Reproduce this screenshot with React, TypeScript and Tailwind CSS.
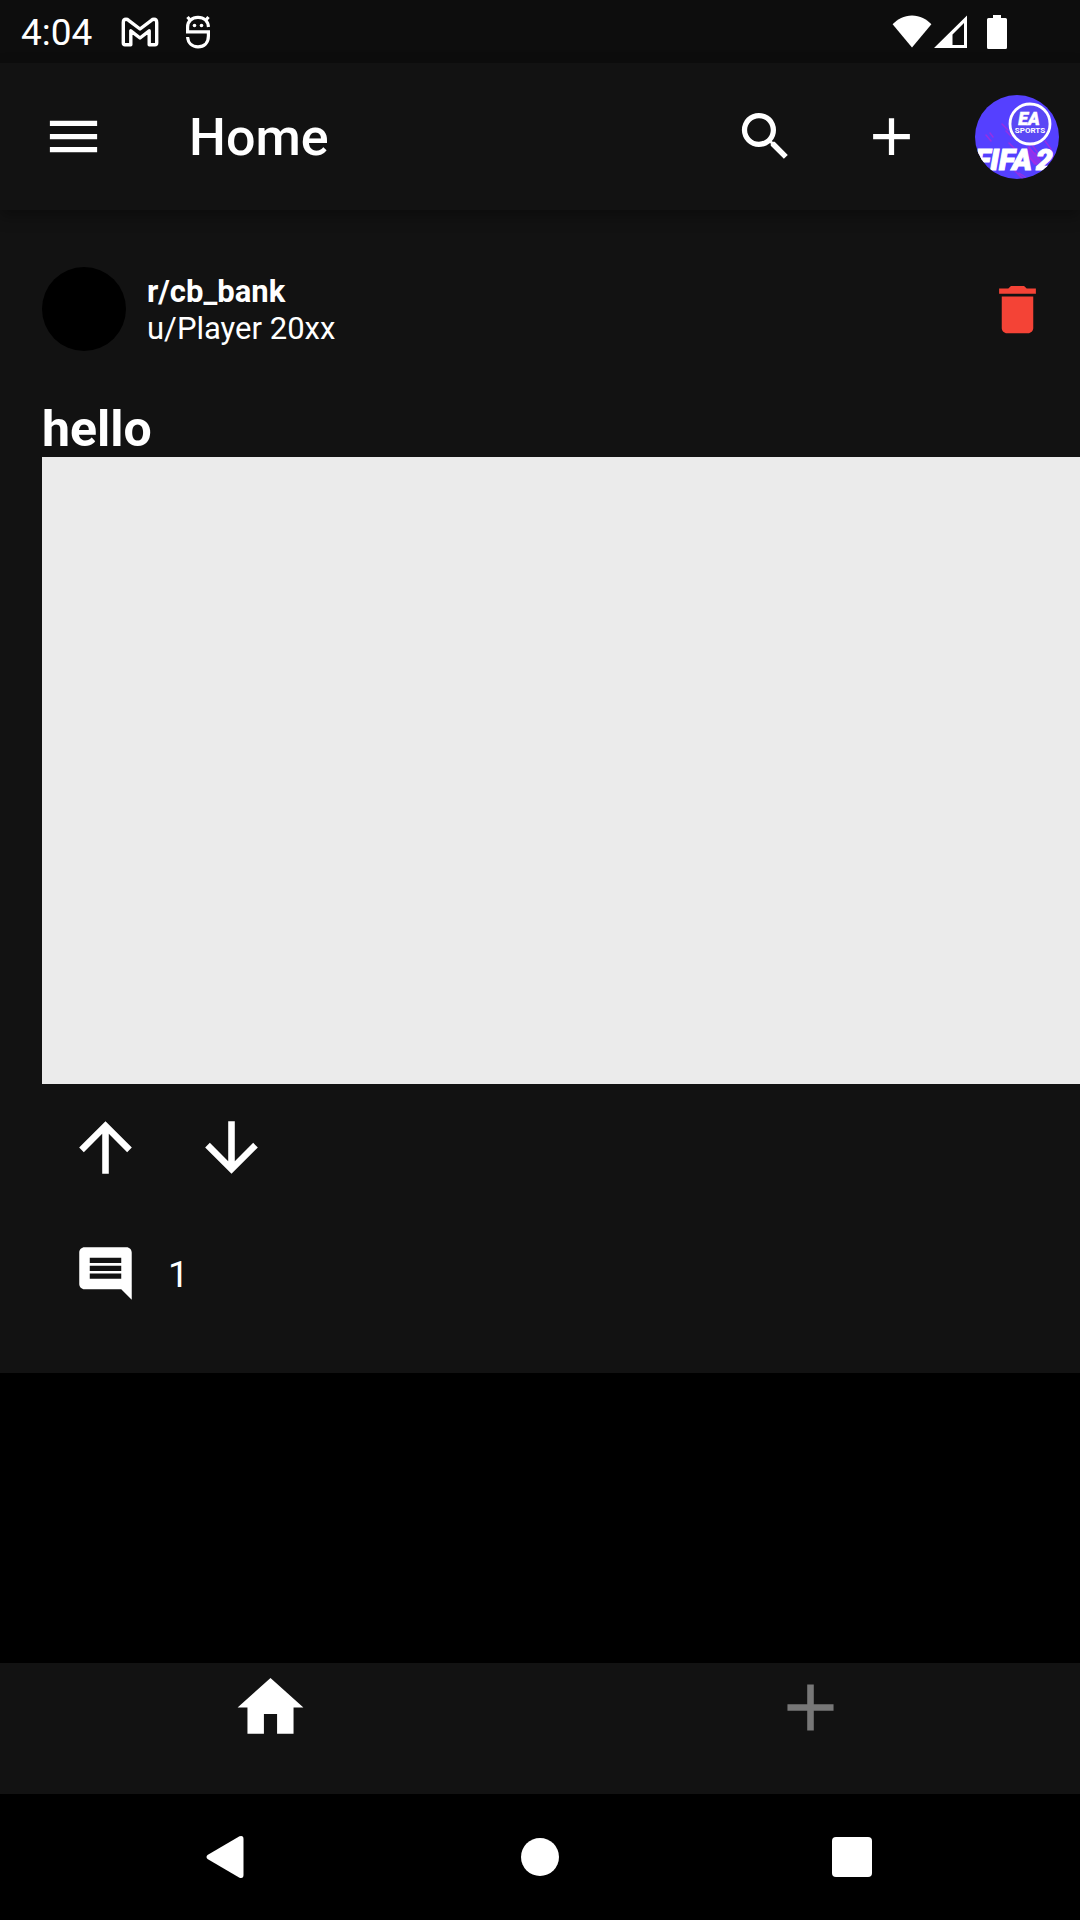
import type { ReactNode } from "react";
import {
  MdAdd,
  MdArrowDownward,
  MdArrowUpward,
  MdComment,
  MdDelete,
  MdHome,
  MdMenu,
  MdSearch,
} from "react-icons/md";

function IconButton({ label, children }: { label: string; children: ReactNode }) {
  return (
    <button
      type="button"
      aria-label={label}
      className="flex size-[126px] shrink-0 items-center justify-center"
    >
      {children}
    </button>
  );
}

function StatusBar() {
  return (
    <div className="flex h-[63px] items-center bg-[#0d0d0d] pr-[72px] pl-[21px]">
      <span className="pt-[2px] text-[37px] leading-[42px]">4:04</span>
      <svg
        viewBox="0 0 38 30"
        className="ml-[29px] h-[30px] w-[38px]"
        fill="none"
        stroke="currentColor"
        strokeWidth="3.4"
        strokeLinejoin="round"
        aria-hidden="true"
      >
        <path d="M2.300 5.400Q2.300 2.300 5 2.300Q6.500 2.300 7.600 3.300L19 12L30.400 3.300Q31.500 2.300 33 2.300Q35.700 2.300 35.700 5.400V26Q35.700 27.700 34 27.700H28.200V13.800L19 21L9.800 13.800V27.700H4Q2.300 27.700 2.300 26Z" />
      </svg>
      <svg
        viewBox="0 0 26 34"
        className="ml-[26px] h-[34px] w-[26px]"
        fill="none"
        stroke="currentColor"
        strokeWidth="3.2"
        aria-hidden="true"
      >
        <path d="M23.500 12C23 6 19 2.400 13 2.400S2.600 6 2.600 12V16.800H23.400V21C23.400 28 19 31.800 13 31.800S3 28 2.600 22" />
        <path d="M5.500 5.500L2.500 2M20.500 5.500L23.500 2" />
        <circle cx="9.500" cy="10.500" r="1.800" fill="currentColor" stroke="none" />
        <circle cx="16.500" cy="10.500" r="1.800" fill="currentColor" stroke="none" />
      </svg>
      <div className="ml-auto flex items-center">
        <svg viewBox="0 0 40 34" className="h-[34px] w-[40px]" fill="currentColor" aria-hidden="true">
          <path d="M0.600 9.300C5.500 4 12 0.500 20 0.500S34.500 4 39.400 9.300L20 32.500Z" />
        </svg>
        <svg viewBox="0 0 34 34" className="ml-[2px] h-[34px] w-[34px]" fill="currentColor" aria-hidden="true">
          <path fillRule="evenodd" d="M0 33L33 0.500V33ZM18.500 19.500V30H30V8Z" />
        </svg>
        <svg viewBox="0 0 22 34" className="ml-[18px] h-[34px] w-[22px]" fill="currentColor" aria-hidden="true">
          <path d="M7 0H15V3H19.500Q21 3 21 4.500V32.500Q21 34 19.500 34H2.500Q1 34 1 32.500V4.500Q1 3 2.500 3H7Z" />
        </svg>
      </div>
    </div>
  );
}

function ProfilePicture() {
  return (
    <svg viewBox="0 0 84 84" className="size-[84px] rounded-full" aria-hidden="true">
      <rect width="84" height="84" fill="#5540ff" />
      <g stroke="#a62be0" strokeWidth="1.500" strokeLinecap="round" opacity="0.8">
        <path d="M11 40l5 6M15 38l3 4M27 29l6 6M31 36l5 5M34 48l6 6M53 52l8 8M57 50l9 12M52 60l12 12M60 58l6 9M40 76l8 8M44 78l6 4M70 46l6 8" />
      </g>
      <path d="M54 50l12 18-7 2-7-10z" fill="#b02ae6" opacity="0.55" />
      <circle cx="55" cy="29" r="20" fill="#5a48f5" stroke="#fff" strokeWidth="2.800" />
      <g fill="#fff" stroke="#fff" fontFamily="Roboto, 'Liberation Sans', sans-serif">
        <text x="54" y="30" fontSize="18" fontWeight="900" fontStyle="italic" strokeWidth="0.500" textAnchor="middle">
          EA
        </text>
        <text x="55" y="38" fontSize="8" fontWeight="700" strokeWidth="0" textAnchor="middle">
          SPORTS
        </text>
        <text x="57" y="75" fontSize="30" fontWeight="900" fontStyle="italic" strokeWidth="1" textAnchor="end">
          FIFA
        </text>
        <text x="61" y="75" fontSize="30" fontWeight="900" fontStyle="italic" strokeWidth="1">
          2
        </text>
      </g>
    </svg>
  );
}

function AppBar() {
  return (
    <header className="relative flex h-[147px] items-center bg-[#121212] shadow-[0_6px_14px_rgba(0,0,0,0.35)]">
      <div className="flex flex-1 items-center pl-[10px]">
        <IconButton label="Open menu">
          <MdMenu className="size-[63px]" />
        </IconButton>
        <h1 className="ml-[53px] pt-[3px] text-[52px] leading-[62px] font-medium">Home</h1>
      </div>
      <IconButton label="Search">
        <MdSearch className="size-[63px]" />
      </IconButton>
      <IconButton label="Create post">
        <MdAdd className="size-[63px]" />
      </IconButton>
      <IconButton label="Profile">
        <ProfilePicture />
      </IconButton>
    </header>
  );
}

function Post() {
  return (
    <article className="bg-[#121212] pt-[36px] pb-[37px] pl-[42px]">
      <div className="flex items-center">
        <div className="size-[84px] rounded-full bg-black" />
        <div className="ml-[21px] flex-1 pt-[2px] text-[31px] leading-[37px]">
          <p className="font-bold">r/cb_bank</p>
          <p>u/Player 20xx</p>
        </div>
        <IconButton label="Delete post">
          <MdDelete className="size-[63px] text-[#f44336]" />
        </IconButton>
      </div>
      <h2 className="mt-[30px] text-[50px] leading-[55px] font-bold">hello</h2>
      <div className="h-[627px] bg-[#ebebeb]" />
      <div className="flex">
        <IconButton label="Upvote">
          <MdArrowUpward className="size-[79px]" />
        </IconButton>
        <IconButton label="Downvote">
          <MdArrowDownward className="size-[79px]" />
        </IconButton>
      </div>
      <div className="flex items-center">
        <IconButton label="Comments">
          <MdComment className="size-[63px]" />
        </IconButton>
        <span className="pt-[3px] text-[37px] leading-[42px]">1</span>
      </div>
    </article>
  );
}

function TabBar() {
  return (
    <nav className="flex h-[131px] bg-[#121212]">
      <button type="button" aria-label="Home" className="flex flex-1 items-start justify-center pt-[5px]">
        <MdHome className="size-[79px]" />
      </button>
      <button
        type="button"
        aria-label="Add"
        className="flex flex-1 items-start justify-center pt-[5px] text-[#777777]"
      >
        <MdAdd className="size-[79px]" />
      </button>
    </nav>
  );
}

function SystemNav() {
  return (
    <div className="grid h-[126px] grid-cols-3 bg-black px-[72px]">
      <button type="button" aria-label="Back" className="flex items-center justify-center">
        <svg viewBox="0 0 44 44" className="size-[44px]" fill="currentColor" aria-hidden="true">
          <path d="M1.500 20L33.500 1.300Q37.500 0 37.500 4V40Q37.500 44 33.500 42.700L1.500 24Q-0.500 22 1.500 20Z" />
        </svg>
      </button>
      <button type="button" aria-label="System home" className="flex items-center justify-center">
        <span className="size-[38px] rounded-full bg-white" />
      </button>
      <button type="button" aria-label="Recent apps" className="flex items-center justify-center">
        <span className="size-[40px] rounded bg-white" />
      </button>
    </div>
  );
}

export default function App() {
  return (
    <div className="flex min-h-screen flex-col bg-black font-[Roboto,'Liberation_Sans',sans-serif] text-white">
      <StatusBar />
      <AppBar />
      <main className="flex-1">
        <Post />
      </main>
      <TabBar />
      <SystemNav />
    </div>
  );
}
